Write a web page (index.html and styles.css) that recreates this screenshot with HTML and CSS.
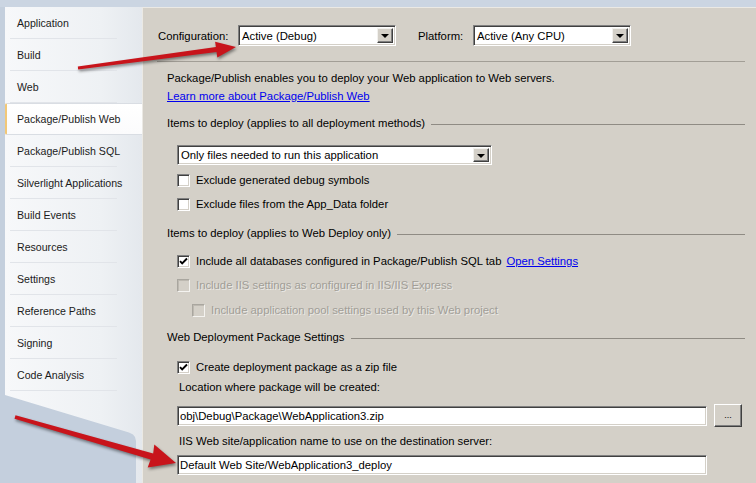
FILE: index.html
```html
<!DOCTYPE html>
<html>
<head>
<meta charset="utf-8">
<title>Package/Publish Web</title>
<link rel="stylesheet" href="styles.css">
</head>
<body>
<div class="app">
  <nav class="sidebar">
    <div class="tabs">
      <div class="tab">Application</div>
      <div class="tab">Build</div>
      <div class="tab">Web</div>
      <div class="tab active">Package/Publish Web</div>
      <div class="tab">Package/Publish SQL</div>
      <div class="tab">Silverlight Applications</div>
      <div class="tab">Build Events</div>
      <div class="tab">Resources</div>
      <div class="tab">Settings</div>
      <div class="tab">Reference Paths</div>
      <div class="tab">Signing</div>
      <div class="tab">Code Analysis</div>
    </div>
  </nav>
  <main class="content">
    <div class="config-row">
      <span class="lbl lbl-config">Configuration:</span>
      <div class="combo combo-sm"><span class="combo-text">Active (Debug)</span><span class="drop"><span class="tri"></span></span></div>
      <span class="lbl lbl-platform">Platform:</span>
      <div class="combo combo-sm"><span class="combo-text">Active (Any CPU)</span><span class="drop"><span class="tri"></span></span></div>
    </div>
    <div class="sep"></div>
    <p class="desc">Package/Publish enables you to deploy your Web application to Web servers.</p>
    <p class="desc desc-link"><a class="link" href="#">Learn more about Package/Publish Web</a></p>

    <div class="group-h g1"><span>Items to deploy (applies to all deployment methods)</span></div>
    <div class="indent">
      <div class="combo combo-wide"><span class="combo-text">Only files needed to run this application</span><span class="drop"><span class="tri"></span></span></div>
      <label class="chk c1"><span class="box"></span>Exclude generated debug symbols</label>
      <label class="chk c2"><span class="box"></span>Exclude files from the App_Data folder</label>
    </div>

    <div class="group-h g2"><span>Items to deploy (applies to Web Deploy only)</span></div>
    <div class="indent">
      <label class="chk c3"><span class="box checked"><svg width="9" height="9" viewBox="0 0 9 9"><polyline points="1,4.2 3.2,6.5 8,1.5" fill="none" stroke="#000" stroke-width="1.9"/></svg></span>Include all databases configured in Package/Publish SQL tab<a class="link open" href="#">Open Settings</a></label>
      <label class="chk c4 disabled"><span class="box"></span>Include IIS settings as configured in IIS/IIS Express</label>
      <label class="chk c5 disabled sub"><span class="box"></span>Include application pool settings used by this Web project</label>
    </div>

    <div class="group-h g3"><span>Web Deployment Package Settings</span></div>
    <div class="indent">
      <label class="chk c6"><span class="box checked"><svg width="9" height="9" viewBox="0 0 9 9"><polyline points="1,4.2 3.2,6.5 8,1.5" fill="none" stroke="#000" stroke-width="1.9"/></svg></span>Create deployment package as a zip file</label>
      <p class="field-lbl l1">Location where package will be created:</p>
      <div class="tb-row">
        <div class="tb">obj\Debug\Package\WebApplication3.zip</div>
        <div class="btn">...</div>
      </div>
      <p class="field-lbl l2">IIS Web site/application name to use on the destination server:</p>
      <div class="tb tb2">Default Web Site/WebApplication3_deploy</div>
    </div>
  </main>
</div>
<svg class="arrows" width="756" height="483" viewBox="0 0 756 483">
  <polygon points="77.8,66.5 215.9,47.1 215.1,41.7 236,47 217.3,57.5 216.5,52.1 78.2,69.5" fill="#c8141b"/>
  <polygon points="15.5,415.3 153.2,453.6 154.3,444.4 176,463 147.7,467.4 150.6,459.4 14.5,418.7" fill="#c8141b"/>
</svg>
</body>
</html>
```

FILE: styles.css
```css
* { box-sizing: border-box; }
html, body { margin: 0; padding: 0; }
body {
  width: 756px;
  height: 483px;
  overflow: hidden;
  position: relative;
  background: #cbd5e2;
  font-family: "Liberation Sans", Arial, sans-serif;
  font-size: 11.3px;
  color: #000;
}
p { margin: 0; }

.app {
  display: flex;
  height: 100%;
  padding-top: 7px;
}

/* ---------- sidebar ---------- */
.sidebar {
  width: 142px;
  flex: none;
  padding-left: 5px;
  background: #c4cfdd;
}
.tabs {
  height: 100%;
  background: linear-gradient(to right, #f7f8fa 0%, #eef1f4 70%, #e4e8ed 100%);
  clip-path: polygon(0 0, 100% 0, 100% 100%, 131px 100%, 131px 434px, 130px 430px, 128px 427.5px, 124px 425.5px, 0 388px);
}
.tab {
  height: 32px;
  margin: 0 25px 0 5px;
  padding-left: 7px;
  display: flex;
  align-items: center;
  border-bottom: 1px solid #e1e4e9;
  color: #1b1b1b;
  font-family: "Liberation Sans", Arial, sans-serif;
  font-size: 10.6px;
  white-space: nowrap;
}
.tab.active {
  margin: 0;
  padding-left: 10px;
  background: linear-gradient(to bottom, #ffffff, #fbfbfc);
  border-top: 1px solid #d9dde3;
  border-bottom: 1px solid #d9dde3;
  border-left: 2px solid #f2c878;
  border-radius: 2px 0 0 2px;
}

/* ---------- content ---------- */
.content {
  flex: 1;
  background: #d4d0c8;
  box-shadow: inset 1px 1px 0 #ebe9e4;
  padding: 0 11px 0 15px;
}
.config-row {
  display: flex;
  align-items: center;
  height: 21px;
  margin-top: 18px;
  padding-left: 1px;
}
.lbl-config { width: 80px; }
.lbl-platform { width: 55px; margin-left: 22px; }

.combo {
  display: flex;
  align-items: center;
  background: #fff;
  border: 1px solid;
  border-color: #808080 #ffffff #ffffff #808080;
  box-shadow: inset 1px 1px 0 #404040, inset -1px -1px 0 #d4d0c8;
  padding: 2px;
}
.combo-sm { width: 158px; height: 21px; }
.combo-wide { width: 315px; height: 20px; margin-top: 15px; }
.combo-text { flex: 1; padding-left: 1px; white-space: nowrap; overflow: hidden; }
.drop {
  width: 16px;
  height: 100%;
  background: #d4d0c8;
  border: 1px solid;
  border-color: #f2f1ee #404040 #404040 #f2f1ee;
  box-shadow: inset -1px -1px 0 #808080;
  display: flex;
  align-items: center;
  justify-content: center;
}
.tri {
  width: 0;
  height: 0;
  border-left: 4px solid transparent;
  border-right: 4px solid transparent;
  border-top: 4px solid #000;
  margin-top: 1px;
}

.sep {
  height: 1px;
  background: #a29e96;
  margin-top: 15px;
}
.desc {
  padding-left: 10px;
  line-height: 14px;
  margin-top: 9px;
  white-space: nowrap;
}
.desc-link { margin-top: 4px; }
.link { color: #0000ee; text-decoration: underline; }

.group-h {
  display: flex;
  align-items: center;
  height: 14px;
  padding-left: 10px;
  white-space: nowrap;
}
.group-h::after {
  content: "";
  flex: 1;
  height: 1px;
  background: #8f8b84;
  margin-left: 6px;
  margin-top: 3px;
}
.g1 { margin-top: 13px; }
.g2 { margin-top: 15px; }
.g3 { margin-top: 13px; }

.indent { padding-left: 20px; }

.chk {
  display: flex;
  align-items: center;
  height: 14px;
  gap: 6px;
  white-space: nowrap;
}
.box {
  width: 13px;
  height: 13px;
  flex: none;
  background: #fff;
  border: 1px solid;
  border-color: #808080 #ffffff #ffffff #808080;
  box-shadow: inset 1px 1px 0 #404040, inset -1px -1px 0 #d4d0c8;
  display: flex;
  align-items: center;
  justify-content: center;
}
.c1 { margin-top: 8px; }
.c2 { margin-top: 10px; }
.c3 { margin-top: 14px; }
.c4 { margin-top: 10px; }
.c5 { margin-top: 11px; padding-left: 15px; }
.c6 { margin-top: 16px; }
.open { margin-left: -1px; }

.disabled { color: #a19e97; text-shadow: 1px 1px 0 rgba(255,255,255,0.55); }
.disabled .box {
  background: #d4d0c8;
  border-color: #a9a69f #f4f3f0 #f4f3f0 #a9a69f;
  box-shadow: inset 1px 1px 0 #bdb9b1;
}

.field-lbl { line-height: 14px; padding-left: 2px; white-space: nowrap; }
.l1 { margin-top: 6px; }
.l2 { margin-top: 7px; }

.tb-row {
  display: flex;
  align-items: center;
  gap: 7px;
  margin-top: 10px;
  height: 23px;
}
.tb {
  width: 530px;
  height: 20px;
  background: #fff;
  border: 1px solid;
  border-color: #808080 #ffffff #ffffff #808080;
  box-shadow: inset 1px 1px 0 #404040, inset -1px -1px 0 #d4d0c8;
  padding: 0 0 0 2px;
  display: flex;
  align-items: center;
  white-space: nowrap;
}
.tb2 { margin-top: 7px; }
.btn {
  width: 28px;
  height: 23px;
  background: #d4d0c8;
  border: 1px solid;
  border-color: #ffffff #404040 #404040 #ffffff;
  box-shadow: inset -1px -1px 0 #808080;
  display: flex;
  align-items: center;
  justify-content: center;
  font-size: 9px;
  padding-bottom: 2px;
}

.arrows {
  position: absolute;
  left: 0;
  top: 0;
  pointer-events: none;
  filter: drop-shadow(1px 2px 1.5px rgba(0,0,0,0.45));
}
```
